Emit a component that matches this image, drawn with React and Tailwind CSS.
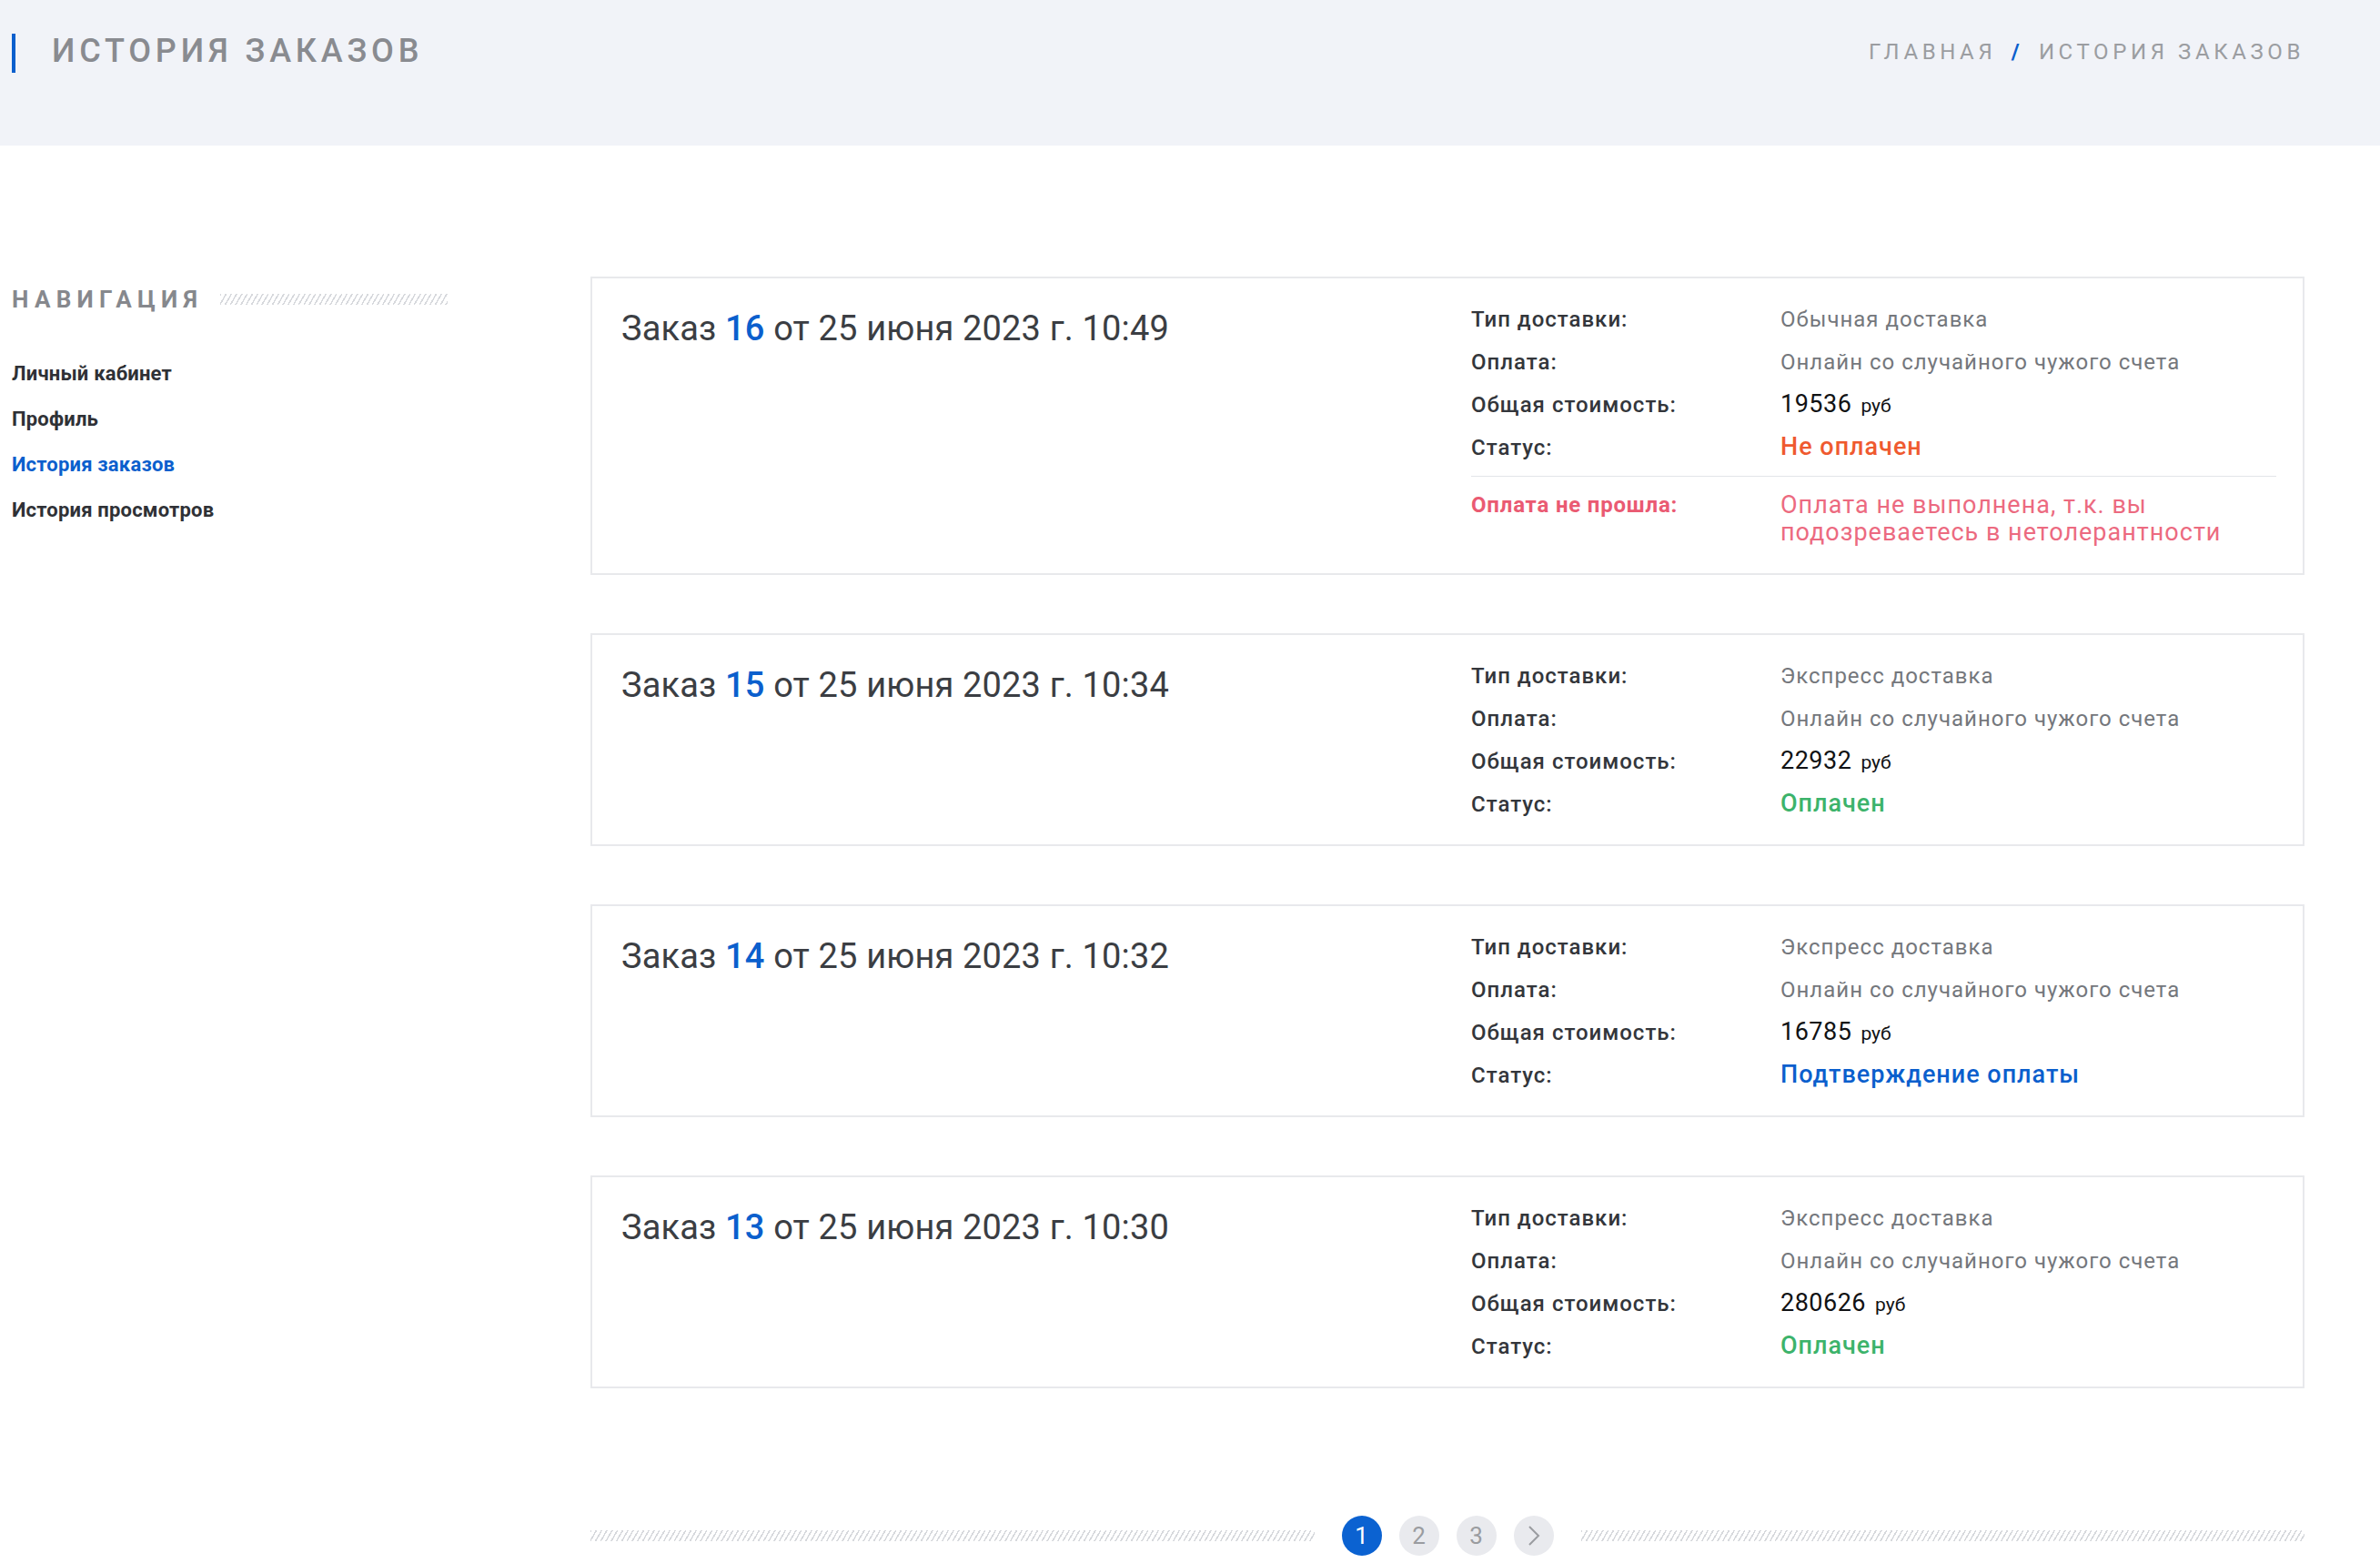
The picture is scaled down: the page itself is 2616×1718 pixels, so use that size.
import React from 'react';

const orders = [
  {
    id: 16,
    time: '10:49',
    delivery: 'Обычная доставка',
    price: '19536',
    status: 'Не оплачен',
    statusColor: 'text-[#ef5a2f]',
    error: true,
  },
  {
    id: 15,
    time: '10:34',
    delivery: 'Экспресс доставка',
    price: '22932',
    status: 'Оплачен',
    statusColor: 'text-[#3cb36b]',
  },
  {
    id: 14,
    time: '10:32',
    delivery: 'Экспресс доставка',
    price: '16785',
    status: 'Подтверждение оплаты',
    statusColor: 'text-[#0b5fcd]',
  },
  {
    id: 13,
    time: '10:30',
    delivery: 'Экспресс доставка',
    price: '280626',
    status: 'Оплачен',
    statusColor: 'text-[#3cb36b]',
  },
];

const navItems = [
  { label: 'Личный кабинет' },
  { label: 'Профиль' },
  { label: 'История заказов', active: true },
  { label: 'История просмотров' },
];

const Hatch = ({ className = '' }) => (
  <div
    className={`h-[12px] bg-[image:repeating-linear-gradient(120deg,#d6d8dc_0px,#d6d8dc_1.5px,transparent_1.5px,transparent_5px)] ${className}`}
  />
);

const Row = ({ label, children }) => (
  <div className="flex h-[47px] items-center">
    <div className="w-[340px] shrink-0 text-[24px] font-medium tracking-[1px] text-[#33363b]">{label}</div>
    <div className="flex flex-1 items-baseline">{children}</div>
  </div>
);

const OrderCard = ({ order }) => (
  <div className="flex border-2 border-[#e8e9ec] pl-[32px] pr-[29px] py-[21px]">
    <div className="flex-1 pt-[7px] text-[38px] leading-[54px] tracking-[0.15px] text-[#3b3e43]">
      Заказ <span className="font-medium text-[#0b5fcd]">{order.id}</span> от 25 июня 2023 г. {order.time}
    </div>
    <div className="w-[885px] shrink-0">
      <Row label="Тип доставки:">
        <span className="text-[24px] tracking-[1px] text-[#74777c]">{order.delivery}</span>
      </Row>
      <Row label="Оплата:">
        <span className="text-[24px] tracking-[1px] text-[#74777c]">Онлайн со случайного чужого счета</span>
      </Row>
      <Row label="Общая стоимость:">
        <span className="text-[27px] tracking-[0.5px] text-[#111214]">{order.price}</span>
        <span className="ml-[10px] text-[21px] text-[#111214]">руб</span>
      </Row>
      <Row label="Статус:">
        <span className={`text-[27px] font-medium tracking-[1px] ${order.statusColor}`}>{order.status}</span>
      </Row>
      {order.error && (
        <>
          <div className="mt-[8px] h-px bg-[#e3e5e9]" />
          <div className="mt-[16px] mb-[9px] flex leading-[30px]">
            <div className="w-[340px] shrink-0 text-[24px] font-bold tracking-[0.8px] text-[#ea5a72]">Оплата не прошла:</div>
            <div className="flex-1 text-[27px] tracking-[1px] text-[#ec6a80]">
              Оплата не выполнена, т.к. вы
              <br />
              подозреваетесь в нетолерантности
            </div>
          </div>
        </>
      )}
    </div>
  </div>
);

export default function App() {
  return (
    <div className="min-h-screen w-[2616px] bg-white font-['Roboto',sans-serif]">
      <header className="h-[160px] bg-[#f1f3f8] pl-[13px] pr-[83px] pt-[37px]">
        <div className="flex items-center justify-between">
          <div className="flex h-[43px] items-center">
            <div className="h-[43px] w-[4px] bg-[#0b5fcd]" />
            <h1 className="ml-[40px] pb-[6px] text-[36px] font-medium uppercase tracking-[4.8px] text-[#898b90]">
              История заказов
            </h1>
          </div>
          <div className="pb-[4px] text-[24px] uppercase tracking-[4.6px] text-[#9b9da1]">
            Главная <span className="mx-[6px] font-bold text-[#0b5fcd]">/</span> История заказов
          </div>
        </div>
      </header>

      <div className="flex pl-[13px] pr-[83px] pt-[144px]">
        <aside className="w-[479px] shrink-0 pt-[7px]">
          <div className="flex items-center">
            <h3 className="text-[26px] font-bold uppercase leading-[36px] tracking-[6.3px] text-[#86888d]">Навигация</h3>
            <Hatch className="ml-[19px] flex-1" />
          </div>
          <ul className="mt-[39px]">
            {navItems.map((item, i) => (
              <li
                key={i}
                className={`text-[22px] font-bold leading-[50px] tracking-[0.2px] ${item.active ? 'text-[#0b5fcd]' : 'text-[#2f3136]'}`}
              >
                {item.label}
              </li>
            ))}
          </ul>
        </aside>

        <main className="ml-[157px] flex-1">
          <div className="flex flex-col gap-[64px]">
            {orders.map((order) => (
              <OrderCard key={order.id} order={order} />
            ))}
          </div>

          <div className="mt-[140px] flex items-center">
            <Hatch className="flex-1" />
            <div className="mx-[30px] flex gap-[19px]">
              <span className="flex h-[44px] w-[44px] items-center justify-center rounded-full bg-[#0b62d1] text-[26px] text-white">1</span>
              <span className="flex h-[44px] w-[44px] items-center justify-center rounded-full bg-[#e9eaee] text-[26px] text-[#9a9ca0]">2</span>
              <span className="flex h-[44px] w-[44px] items-center justify-center rounded-full bg-[#e9eaee] text-[26px] text-[#9a9ca0]">3</span>
              <span className="flex h-[44px] w-[44px] items-center justify-center rounded-full bg-[#e9eaee] text-[#9a9ca0]">
                <svg width="14" height="24" viewBox="0 0 14 24" fill="none" stroke="currentColor" strokeWidth="2">
                  <path d="M2 2 L12 12 L2 22" />
                </svg>
              </span>
            </div>
            <Hatch className="flex-1" />
          </div>
        </main>
      </div>
    </div>
  );
}
